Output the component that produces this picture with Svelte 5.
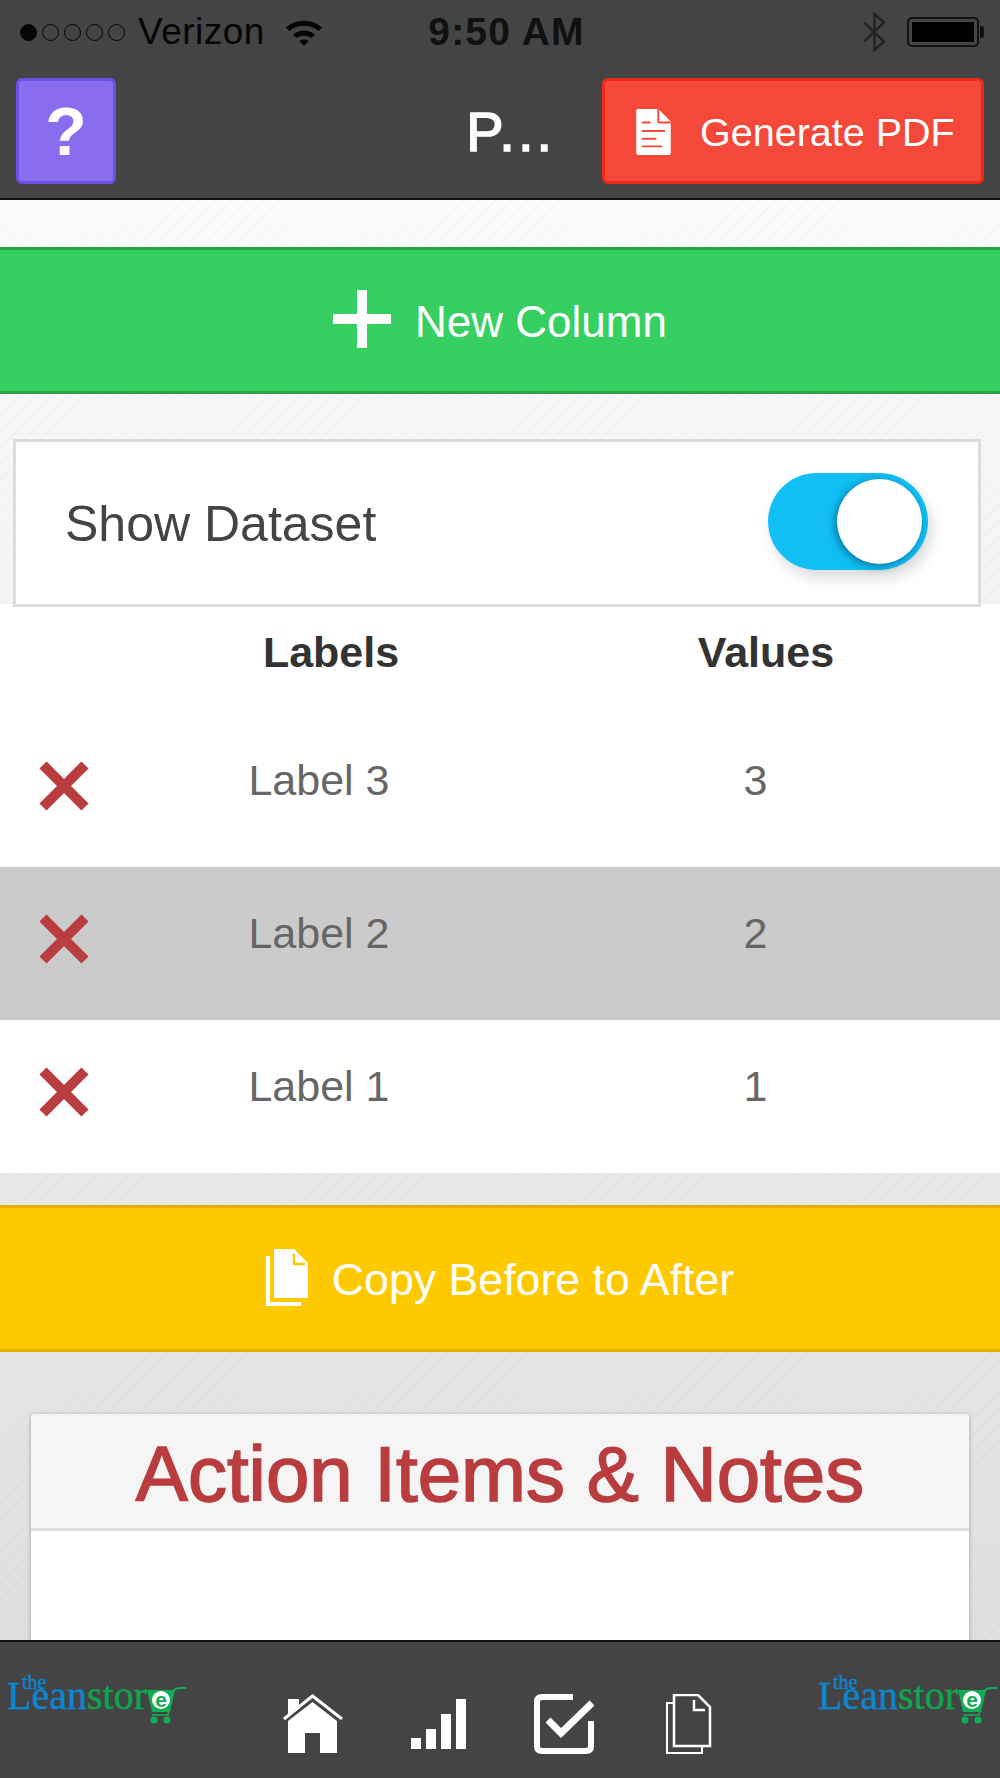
<script lang="ts">
  let showDataset = $state(true);

  let rows = $state([
    { label: 'Label 3', value: 3 },
    { label: 'Label 2', value: 2 },
    { label: 'Label 1', value: 1 }
  ]);

  const removeRow = (i: number) => rows.splice(i, 1);
</script>

{#snippet logo()}
  <div class="logo">
    <span class="logo__the">the</span>
    <span class="logo__lean">Lean</span><span class="logo__store">stor</span>
    <svg class="logo__cart" viewBox="0 0 40 38" width="40" height="38">
      <path d="M26 5C27 2 29 1 34 1H39" fill="none" stroke="#0fae54" stroke-width="2" />
      <path d="M26 5L21 28H5" fill="none" stroke="#0fae54" stroke-width="1.6" />
      <path d="M0 3H28L23 25H5Z" fill="#0fae54" />
      <circle cx="14" cy="13" r="9" fill="#fff" />
      <text x="14" y="19.500" text-anchor="middle" class="logo__e">e</text>
      <circle cx="7" cy="33" r="3.500" fill="#0fae54" />
      <circle cx="20" cy="33" r="3.500" fill="#0fae54" />
    </svg>
  </div>
{/snippet}

<div class="page">
  <header class="top">
    <div class="status">
      <div class="status__left">
        <span class="dots">
          <i class="dot dot--on"></i><i class="dot"></i><i class="dot"></i><i class="dot"></i><i class="dot"></i>
        </span>
        <span class="carrier">Verizon</span>
        <svg class="wifi" viewBox="0 0 38 30" width="38" height="30">
          <path d="M1 10.500C11 1.500 27 1.500 37 10.500l-3.500 3.500C25.500 7 12.500 7 4.500 14z" fill="#050505" />
          <path d="M8 17.500c6.500-5.500 15.500-5.500 22 0l-3.500 3.500c-4.500-3.500-10.500-3.500-15 0z" fill="#050505" />
          <path d="M14.500 24c2.500-2 6.500-2 9 0L19 29z" fill="#050505" />
        </svg>
      </div>
      <span class="clock">9:50 AM</span>
      <div class="status__right">
        <svg class="bluetooth" viewBox="0 0 26 42" width="25" height="40">
          <path d="M2 11l21 20-10 9V2l10 9L2 31" fill="none" stroke="#222" stroke-width="2.600" />
        </svg>
        <div class="battery"><div class="battery__fill"></div></div>
      </div>
    </div>

    <div class="nav">
      <button class="btn-help" aria-label="Help">?</button>
      <div class="nav__title">P...</div>
      <button class="btn-pdf">
        <svg viewBox="0 0 36 48" width="35" height="46">
          <path fill="#fff" fill-rule="evenodd" d="M1 0h21v13q0 2 2 2h12v31q0 2-2 2H2q-2 0-2-2V2q0-2 1-2zM6 13v2h9v-2zM6 22v2h24v-2zM6 30v2h15v-2zM6 38v2h21v-2z" />
          <path fill="#fff" d="M24 1l12 12H24z" />
        </svg>
        <span>Generate PDF</span>
      </button>
    </div>
  </header>

  <main class="content">
    <button class="wide wide--green">
      <svg class="wide__icon" viewBox="0 0 58 58" width="58" height="58">
        <path d="M24 0h10v24h24v10H34v24H24V34H0V24h24z" fill="#fff" />
      </svg>
      <span>New Column</span>
    </button>

    <div class="toggle-card">
      <span>Show Dataset</span>
      <button
        class="toggle"
        class:toggle--on={showDataset}
        aria-label="Show Dataset"
        onclick={() => (showDataset = !showDataset)}
      >
        <span class="toggle__knob"></span>
      </button>
    </div>

    {#if showDataset}
      <section class="table">
        <div class="table__head">
          <span></span>
          <span>Labels</span>
          <span>Values</span>
        </div>
        {#each rows as row, i}
          <div class="table__row" class:table__row--alt={i % 2 === 1}>
            <button class="remove" aria-label="Remove" onclick={() => removeRow(i)}>
              <svg viewBox="0 0 52 52" width="52" height="52">
                <path d="M5 5l42 42M47 5L5 47" stroke="#b93c3e" stroke-width="10" fill="none" />
              </svg>
            </button>
            <span class="table__cell">{row.label}</span>
            <span class="table__cell">{row.value}</span>
          </div>
        {/each}
      </section>
    {/if}

    <button class="wide wide--yellow">
      <svg class="wide__icon" viewBox="0 0 42 57" width="42" height="57">
        <path fill="#fff" d="M0 7h4v46h31v4H0z" />
        <path fill="#fff" d="M8 0h20l14 14v35H8z" />
        <path fill="none" stroke="#ffc900" stroke-width="2.500" d="M28 5v10h11" />
      </svg>
      <span>Copy Before to After</span>
    </button>

    <section class="notes">
      <h2 class="notes__title">Action Items &amp; Notes</h2>
      <div class="notes__body"></div>
    </section>
  </main>

  <footer class="bottom">
    {@render logo()}
    <nav class="tabs">
      <svg viewBox="0 0 60 60" width="60" height="60">
        <path d="M1 25L29.500 2 59 25" fill="none" stroke="#fff" stroke-width="3" />
        <path d="M5 5h11v9L5 22z" fill="#fff" />
        <path d="M29.500 8L54 27v32H37V39H22v20H5V27z" fill="#fff" />
      </svg>
      <svg viewBox="0 0 55 50" width="55" height="50">
        <path d="M0 39h10v11H0zM15 30h10v20H15zM30 15h10v35H30zM45 0h10v50H45z" fill="#fff" />
      </svg>
      <svg viewBox="0 0 60 60" width="60" height="60">
        <path d="M39 3H8q-5 0-5 5v44q0 5 5 5h44q5 0 5-5V27" fill="none" stroke="#fff" stroke-width="6" />
        <path d="M14 26l13 13L58 9" fill="none" stroke="#fff" stroke-width="7" />
      </svg>
      <svg viewBox="0 0 46 60" width="46" height="60">
        <path d="M8 9H1v50h35v-7" fill="none" stroke="#fff" stroke-width="2" />
        <path d="M8 1h24l12 12v39H8z" fill="none" stroke="#fff" stroke-width="2.500" />
        <path d="M28 6v10h11" fill="none" stroke="#fff" stroke-width="2.500" />
      </svg>
    </nav>
    {@render logo()}
  </footer>
</div>

<style>
  :global(body) {
    margin: 0;
    font-family: "Liberation Sans", Arial, sans-serif;
  }

  button {
    font: inherit;
    cursor: pointer;
  }

  .page {
    display: flex;
    flex-direction: column;
    height: 1778px;
    overflow: hidden;
  }

  /* ── Top bar ──────────────────────────────────────────── */
  .top {
    flex-shrink: 0;
    height: 198px;
    background: #444;
    border-bottom: 2px solid #111;
  }

  .status {
    display: grid;
    grid-template-columns: 1fr auto 1fr;
    align-items: center;
    height: 64px;
    padding: 0 21px 0 20px;
  }

  .status__left {
    display: flex;
    align-items: center;
  }

  .dots {
    display: flex;
    gap: 5px;
    margin-right: 13px;
  }

  .dot {
    width: 15px;
    height: 15px;
    border: 1.500px solid #050505;
    border-radius: 50%;
  }
  .dot--on { background: #050505; }

  .carrier {
    font-size: 37px;
    color: #050505;
    letter-spacing: 0.5px;
  }

  .wifi { margin-left: 20px; }

  .clock {
    margin-left: 14px;
    font-size: 39px;
    font-weight: 700;
    color: #111;
    letter-spacing: 1.200px;
  }

  .status__right {
    display: flex;
    align-items: center;
    justify-content: flex-end;
    gap: 20px;
  }

  .battery {
    position: relative;
    width: 72px;
    height: 30px;
    padding: 3px;
    box-sizing: border-box;
    border: 2px solid #111;
    border-radius: 5px;
  }
  .battery::after {
    content: "";
    position: absolute;
    right: -7px;
    top: 7px;
    width: 4px;
    height: 12px;
    background: #111;
    border-radius: 0 3px 3px 0;
  }
  .battery__fill {
    height: 100%;
    background: #000;
    border-radius: 1px;
  }

  .nav {
    display: flex;
    align-items: flex-start;
    padding: 14px 16px 0;
  }

  .btn-help {
    flex-shrink: 0;
    width: 100px;
    height: 106px;
    padding: 0;
    border: 3px solid #6e4fe8;
    border-radius: 6px;
    background: #8a6cee;
    color: #fff;
    font-size: 68px;
    font-weight: 700;
  }

  .nav__title {
    flex: 1;
    height: 106px;
    line-height: 108px;
    padding-right: 47px;
    text-align: right;
    color: #fff;
    font-size: 56px;
    letter-spacing: 3px;
    -webkit-text-stroke: 1.500px #fff;
  }

  .btn-pdf {
    display: flex;
    flex-shrink: 0;
    align-items: center;
    width: 382px;
    height: 106px;
    padding: 2px 0 0 31px;
    gap: 29px;
    border: 3px solid #ee2a1a;
    border-radius: 6px;
    background: #f3483a;
    color: #fff;
    font-size: 39.500px;
  }

  /* ── Content ──────────────────────────────────────────── */
  .content {
    flex: 1;
    min-height: 0;
    overflow: hidden;
    padding-top: 47px;
    background:
      repeating-linear-gradient(135deg, transparent 0 9px, rgba(0, 0, 0, 0.018) 9px 11px),
      linear-gradient(#fbfbfb, #dfdfdf);
  }

  .wide {
    display: flex;
    align-items: center;
    justify-content: center;
    width: 100%;
    height: 147px;
    padding: 2px 0 0;
    color: #fff;
    border-left: none;
    border-right: none;
    font-size: 44px;
  }

  .wide__icon { margin-bottom: 5px; }

  .wide--green {
    gap: 24px;
    background: #36cf62;
    border-top: 3px solid #24a548;
    border-bottom: 3px solid #24a548;
  }

  .wide--yellow {
    gap: 24px;
    margin-top: 32px;
    background: #ffc900;
    border-top: 3px solid #e2b000;
    border-bottom: 3px solid #e2b000;
    font-size: 44.700px;
  }

  .toggle-card {
    position: relative;
    display: flex;
    align-items: center;
    justify-content: space-between;
    height: 168px;
    box-sizing: border-box;
    margin: 45px 19px -3px 13px;
    padding: 0 50px 3px 49px;
    background: #fff;
    border: 3px solid #ddd;
    color: #444;
    font-size: 50px;
  }
  .toggle-card > span { margin-top: 5px; }

  .toggle {
    width: 160px;
    height: 97px;
    padding: 0;
    border: none;
    border-radius: 49px;
    background: #bbb;
    box-shadow: 4px 8px 14px rgba(0, 0, 0, 0.14);
  }
  .toggle--on { background: #11bff5; }

  .toggle__knob {
    display: block;
    width: 85px;
    height: 85px;
    margin-left: 69px;
    border-radius: 50%;
    background: #fff;
    box-shadow: -2px 2px 8px rgba(0, 70, 110, 0.65);
  }

  .table {
    background: #fff;
    color: #666;
    font-size: 43px;
  }

  .table__head {
    display: grid;
    grid-template-columns: 130px 402px 1fr;
    height: 110px;
    padding-top: 24px;
    box-sizing: border-box;
    text-align: center;
    font-weight: 700;
    color: #333;
  }

  .table__row {
    display: grid;
    grid-template-columns: 115px 408px 1fr;
    align-items: center;
    height: 153px;
    padding-right: 12px;
    text-align: center;
  }
  .table__row--alt { background: #cbcbcb; }

  .table__cell { margin-bottom: 20px; }

  .remove {
    display: flex;
    width: 52px;
    height: 52px;
    margin: 0 0 10px 38px;
    padding: 0;
    border: none;
    background: none;
  }

  .notes {
    margin: 62px 31px 0;
    background: #fff;
    border-radius: 4px;
    box-shadow: 0 1px 4px rgba(0, 0, 0, 0.3);
  }

  .notes__title {
    margin: 0;
    height: 117px;
    line-height: 120px;
    box-sizing: border-box;
    text-align: center;
    background: #f5f5f5;
    border-bottom: 3px solid #ddd;
    border-radius: 4px 4px 0 0;
    color: #b93c3e;
    font-size: 78px;
    font-weight: 400;
    -webkit-text-stroke: 1.600px #b93c3e;
  }

  .notes__body { height: 200px; }

  /* ── Bottom bar ───────────────────────────────────────── */
  .bottom {
    flex-shrink: 0;
    display: flex;
    align-items: flex-start;
    justify-content: space-between;
    height: 136px;
    background: #444;
    border-top: 2px solid #111;
  }

  .tabs {
    display: flex;
    align-items: center;
    gap: 68px;
    height: 64px;
    margin: 0 auto;
    padding: 50px 11px 0 0;
  }
  .tabs svg:last-child { margin-left: 4px; }

  .logo {
    position: relative;
    display: flex;
    flex-shrink: 0;
    width: 180px;
    margin: 39px 0 0 7px;
    font-family: "Liberation Serif", serif;
    font-size: 40px;
    line-height: 30px;
    -webkit-text-stroke: 0.4px currentColor;
  }
  .logo:last-child { margin-left: 0; margin-right: 2px; }

  .logo__the {
    position: absolute;
    left: 15px;
    top: -5px;
    font-size: 20px;
    line-height: 12px;
    color: #0b86d4;
  }
  .logo__lean { color: #0b86d4; }
  .logo__store { color: #0da64f; }

  .logo__cart { margin: 6px 0 0 0; flex-shrink: 0; }

  .logo__e {
    font-family: "Liberation Sans", sans-serif;
    font-size: 21px;
    font-weight: 700;
    fill: #0fae54;
    -webkit-text-stroke: 0;
  }
</style>
